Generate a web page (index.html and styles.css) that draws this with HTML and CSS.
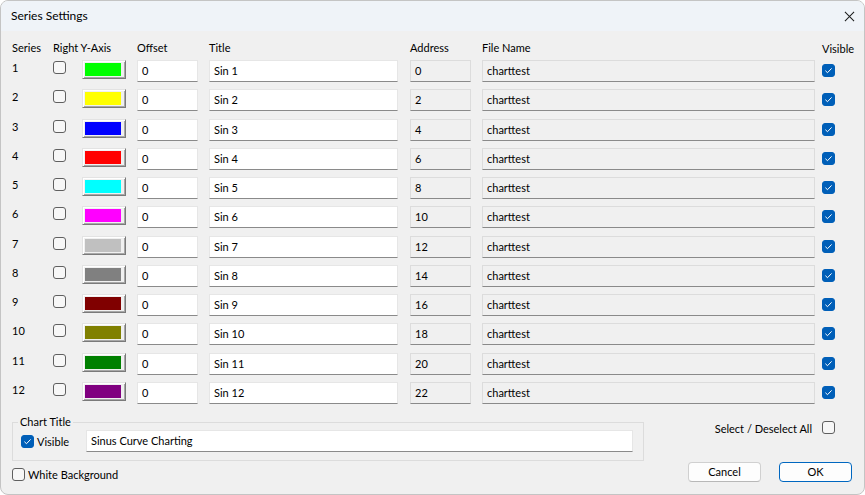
FILE: index.html
```html
<!DOCTYPE html>
<html>
<head>
<meta charset="utf-8">
<link rel="stylesheet" href="styles.css">
</head>
<body>
<div class="window">
  <div class="titlebar">
    <span class="title">Series Settings</span>
    <svg class="close" width="12" height="12" viewBox="0 0 12 12"><path d="M1 1 L11 11 M11 1 L1 11" stroke="#1b1b1b" stroke-width="1.1" fill="none"/></svg>
  </div>
  <div class="table">
    <div class="hd">Series</div><div class="hd span2">Right Y-Axis</div><div class="hd">Offset</div><div class="hd">Title</div><div class="hd">Address</div><div class="hd">File Name</div><div class="hd vis">Visible</div>

    <div class="num">1</div><div class="cb"></div><div class="colorbtn"><span class="sw" style="background:#00ff00"></span></div><div class="tb off">0</div><div class="tb ttl">Sin 1</div><div class="tb ro addr">0</div><div class="tb ro fn">charttest</div><div class="cb on"><svg viewBox="0 0 13 13"><path d="M3.4 6.7 L5.5 8.7 L9.6 4.4"/></svg></div>
    <div class="num">2</div><div class="cb"></div><div class="colorbtn"><span class="sw" style="background:#ffff00"></span></div><div class="tb off">0</div><div class="tb ttl">Sin 2</div><div class="tb ro addr">2</div><div class="tb ro fn">charttest</div><div class="cb on"><svg viewBox="0 0 13 13"><path d="M3.4 6.7 L5.5 8.7 L9.6 4.4"/></svg></div>
    <div class="num">3</div><div class="cb"></div><div class="colorbtn"><span class="sw" style="background:#0000ff"></span></div><div class="tb off">0</div><div class="tb ttl">Sin 3</div><div class="tb ro addr">4</div><div class="tb ro fn">charttest</div><div class="cb on"><svg viewBox="0 0 13 13"><path d="M3.4 6.7 L5.5 8.7 L9.6 4.4"/></svg></div>
    <div class="num">4</div><div class="cb"></div><div class="colorbtn"><span class="sw" style="background:#ff0000"></span></div><div class="tb off">0</div><div class="tb ttl">Sin 4</div><div class="tb ro addr">6</div><div class="tb ro fn">charttest</div><div class="cb on"><svg viewBox="0 0 13 13"><path d="M3.4 6.7 L5.5 8.7 L9.6 4.4"/></svg></div>
    <div class="num">5</div><div class="cb"></div><div class="colorbtn"><span class="sw" style="background:#00ffff"></span></div><div class="tb off">0</div><div class="tb ttl">Sin 5</div><div class="tb ro addr">8</div><div class="tb ro fn">charttest</div><div class="cb on"><svg viewBox="0 0 13 13"><path d="M3.4 6.7 L5.5 8.7 L9.6 4.4"/></svg></div>
    <div class="num">6</div><div class="cb"></div><div class="colorbtn"><span class="sw" style="background:#ff00ff"></span></div><div class="tb off">0</div><div class="tb ttl">Sin 6</div><div class="tb ro addr">10</div><div class="tb ro fn">charttest</div><div class="cb on"><svg viewBox="0 0 13 13"><path d="M3.4 6.7 L5.5 8.7 L9.6 4.4"/></svg></div>
    <div class="num">7</div><div class="cb"></div><div class="colorbtn"><span class="sw" style="background:#c0c0c0"></span></div><div class="tb off">0</div><div class="tb ttl">Sin 7</div><div class="tb ro addr">12</div><div class="tb ro fn">charttest</div><div class="cb on"><svg viewBox="0 0 13 13"><path d="M3.4 6.7 L5.5 8.7 L9.6 4.4"/></svg></div>
    <div class="num">8</div><div class="cb"></div><div class="colorbtn"><span class="sw" style="background:#808080"></span></div><div class="tb off">0</div><div class="tb ttl">Sin 8</div><div class="tb ro addr">14</div><div class="tb ro fn">charttest</div><div class="cb on"><svg viewBox="0 0 13 13"><path d="M3.4 6.7 L5.5 8.7 L9.6 4.4"/></svg></div>
    <div class="num">9</div><div class="cb"></div><div class="colorbtn"><span class="sw" style="background:#800000"></span></div><div class="tb off">0</div><div class="tb ttl">Sin 9</div><div class="tb ro addr">16</div><div class="tb ro fn">charttest</div><div class="cb on"><svg viewBox="0 0 13 13"><path d="M3.4 6.7 L5.5 8.7 L9.6 4.4"/></svg></div>
    <div class="num">10</div><div class="cb"></div><div class="colorbtn"><span class="sw" style="background:#808000"></span></div><div class="tb off">0</div><div class="tb ttl">Sin 10</div><div class="tb ro addr">18</div><div class="tb ro fn">charttest</div><div class="cb on"><svg viewBox="0 0 13 13"><path d="M3.4 6.7 L5.5 8.7 L9.6 4.4"/></svg></div>
    <div class="num">11</div><div class="cb"></div><div class="colorbtn"><span class="sw" style="background:#008000"></span></div><div class="tb off">0</div><div class="tb ttl">Sin 11</div><div class="tb ro addr">20</div><div class="tb ro fn">charttest</div><div class="cb on"><svg viewBox="0 0 13 13"><path d="M3.4 6.7 L5.5 8.7 L9.6 4.4"/></svg></div>
    <div class="num">12</div><div class="cb"></div><div class="colorbtn"><span class="sw" style="background:#800080"></span></div><div class="tb off">0</div><div class="tb ttl">Sin 12</div><div class="tb ro addr">22</div><div class="tb ro fn">charttest</div><div class="cb on"><svg viewBox="0 0 13 13"><path d="M3.4 6.7 L5.5 8.7 L9.6 4.4"/></svg></div>
  </div>
  <div class="bottom">
    <div class="left">
      <fieldset class="group">
        <legend>Chart Title</legend>
        <div class="grouprow">
          <div class="chk"><span class="cb on"><svg viewBox="0 0 13 13"><path d="M3.4 6.7 L5.5 8.7 L9.6 4.4"/></svg></span><span>Visible</span></div>
          <div class="tb charttitle">Sinus Curve Charting</div>
        </div>
      </fieldset>
      <div class="chk whitebg"><span class="cb"></span><span>White Background</span></div>
    </div>
    <div class="right">
      <div class="selall"><span>Select / Deselect All</span><span class="cb"></span></div>
      <div class="buttons"><div class="btn">Cancel</div><div class="btn default">OK</div></div>
    </div>
  </div>
</div>
</body>
</html>
```

FILE: styles.css
```css
* { box-sizing: border-box; }
html, body { margin: 0; padding: 0; background: #ffffff; }
body {
  font-family: "Lato", "Noto Sans", sans-serif;
  font-size: 11px;
  color: #000;
}
.window {
  width: 865px;
  height: 495px;
  border: 1px solid #c4c4c4;
  border-radius: 8px;
  background: #f0f0f0;
  overflow: hidden;
  display: flex;
  flex-direction: column;
}
.titlebar {
  height: 30px;
  background: #eff3f8;
  display: flex;
  align-items: center;
  justify-content: space-between;
  padding: 0 9px 0 10px;
  flex: none;
}
.title { line-height: 30px; font-size: 12px; }
.close { width: 11px; height: 11px; margin-right: 0; }

.table {
  display: grid;
  grid-template-columns: 41px 29px 55px 72px 201px 72px 340px 1fr;
  grid-template-rows: 23px repeat(12, 29.27px);
  padding: 6px 0 0 11px;
  flex: none;
}
.hd { line-height: 22px; align-self: start; white-space: nowrap; }
.span2 { grid-column: span 2; }
.hd.vis { padding-top: 1px; }
.num { line-height: 16px; align-self: start; }

.cb {
  width: 13px;
  height: 13px;
  border: 1px solid #5f5f5f;
  border-radius: 3px;
  background: #f7f7f7;
  margin-top: 1px;
  align-self: start;
  display: inline-block;
}
.cb.on {
  background: #005fb8;
  border-color: #005fb8;
  margin-top: 4px;
  position: relative;
}
.cb.on svg {
  position: absolute;
  left: -1px;
  top: -1px;
  width: 13px;
  height: 13px;
}
.cb.on svg path { stroke: #fff; stroke-width: 1; fill: none; }

.colorbtn {
  width: 44px;
  height: 19px;
  border: 1px solid;
  border-color: #e3e3e3 #7a7a7a #7a7a7a #e3e3e3;
  box-shadow: inset 1px 1px 0 #ffffff, inset -1px -1px 0 #a8a8a8;
  background: #f0f0f0;
  padding: 2px;
  align-self: start;
}
.sw { display: block; width: 36px; height: 13px; }

.tb {
  height: 22px;
  background: #fff;
  border: 1px solid #e6e6e6;
  border-bottom-color: #8a8a8a;
  padding-left: 4px;
  line-height: 20px;
  align-self: start;
  white-space: nowrap;
}
.tb.ro { background: #f0f0f0; border-color: #dcdcdc; border-bottom-color: #8a8a8a; }
.off { width: 61px; }
.ttl { width: 189px; }
.addr { width: 61px; }
.fn { width: 333px; }

.bottom {
  display: flex;
  justify-content: space-between;
  padding: 0 12px 0 11px;
  flex: 1;
}
.left { width: 632px; display: flex; flex-direction: column; }
.group {
  margin: 3px 0 0 0;
  padding: 0 10px 8px 0;
  border: 1px solid #dcdcdc;
  min-width: 0;
}
.group legend {
  padding: 0 2px;
  margin-left: 5px;
  line-height: 16px;
}
.grouprow { display: flex; align-items: center; padding-left: 8px; }
.chk { display: flex; align-items: center; gap: 3px; white-space: nowrap; }
.grouprow .chk { width: 65px; }
.chk .cb, .selall .cb { margin-top: 0; }
.grouprow .cb.on { margin-top: 0; }
.charttitle { flex: 1; padding-left: 4px; }
.whitebg { margin-top: 7px; }

.right { display: flex; flex-direction: column; align-items: flex-end; }
.selall {
  display: flex;
  align-items: center;
  gap: 10px;
  margin-top: 10px;
  padding-right: 17px;
  line-height: 16px;
}
.buttons { display: flex; gap: 18px; margin-top: 25px; }
.btn {
  width: 73px;
  height: 20px;
  border: 1px solid #d0d0d0;
  border-bottom-color: #b8b8b8;
  border-radius: 4px;
  background: #fdfdfd;
  text-align: center;
  line-height: 18px;
}
.btn.default { border: 1px solid #0067c0; }
```
